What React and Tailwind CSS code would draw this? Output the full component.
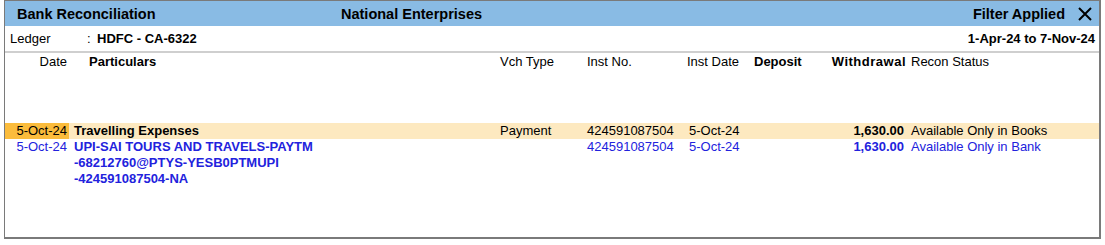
import React from 'react';

const blue = 'text-[#2222dd]';

export default function App() {
  return (
    <div className="w-[1105px] h-[245px] bg-white pl-[4px] font-['Liberation_Sans',Arial,sans-serif] text-[13px] leading-[16px] text-black">
      <div className="w-[1097px] h-[239px] border-t border-l border-r-2 border-b-2 border-[#7a7a7a] flex flex-col">
        {/* title bar */}
        <div className="h-[25px] bg-[#89bbe4] flex items-center font-bold text-[14.5px] pl-[12px] pr-[4px]">
          <span className="w-[324px]">Bank Reconciliation</span>
          <span className="flex-1">National Enterprises</span>
          <span>Filter Applied</span>
          <svg width="16" height="16" viewBox="0 0 16 16" className="ml-[12px] mr-[2px]">
            <path d="M2 2 L14 14 M14 2 L2 14" stroke="#000" strokeWidth="2" />
          </svg>
        </div>

        {/* ledger row */}
        <div className="h-[25px] flex items-center pl-[5px] pr-[4px]">
          <span className="w-[77px]">Ledger</span>
          <span className="w-[10px]">:</span>
          <span className="font-bold flex-1">HDFC - CA-6322</span>
          <span className="font-bold">1-Apr-24 to 7-Nov-24</span>
        </div>
        <div className="h-[2px] bg-[#cfcfcf]" />

        {/* column headers */}
        <div className="h-[18px] flex items-center">
          <span className="w-[64px] text-right pr-[2px]">Date</span>
          <span className="w-[431px] pl-[20px] font-bold">Particulars</span>
          <span className="w-[87px]">Vch Type</span>
          <span className="w-[100px]">Inst No.</span>
          <span className="w-[67px]">Inst Date</span>
          <span className="w-[76px] font-bold">Deposit</span>
          <span className="w-[76px] text-right font-bold tracking-[0.5px]">Withdrawal</span>
          <span className="pl-[5px]">Recon Status</span>
        </div>

        <div className="h-[52px]" />

        {/* book entry */}
        <div className="h-[16px] flex bg-[#fde9c0]">
          <span className="w-[64px] text-right pr-[2px] bg-[#fbbc3c]">5-Oct-24</span>
          <span className="w-[431px] pl-[5px] font-bold">Travelling Expenses</span>
          <span className="w-[87px]">Payment</span>
          <span className="w-[100px]">424591087504</span>
          <span className="w-[67px] pl-[2px]">5-Oct-24</span>
          <span className="w-[76px]" />
          <span className="w-[74px] text-right font-bold">1,630.00</span>
          <span className="pl-[7px]">Available Only in Books</span>
        </div>

        {/* bank entry */}
        <div className={`flex ${blue}`}>
          <span className="w-[64px] text-right pr-[2px]">5-Oct-24</span>
          <span className="w-[431px] pl-[5px] font-bold">
            <div>UPI-SAI TOURS AND TRAVELS-PAYTM</div>
            <div>-68212760@PTYS-YESB0PTMUPI</div>
            <div>-424591087504-NA</div>
          </span>
          <span className="w-[87px]" />
          <span className="w-[100px]">424591087504</span>
          <span className="w-[67px] pl-[2px]">5-Oct-24</span>
          <span className="w-[76px]" />
          <span className="w-[74px] text-right font-bold">1,630.00</span>
          <span className="pl-[7px]">Available Only in Bank</span>
        </div>
      </div>
    </div>
  );
}
